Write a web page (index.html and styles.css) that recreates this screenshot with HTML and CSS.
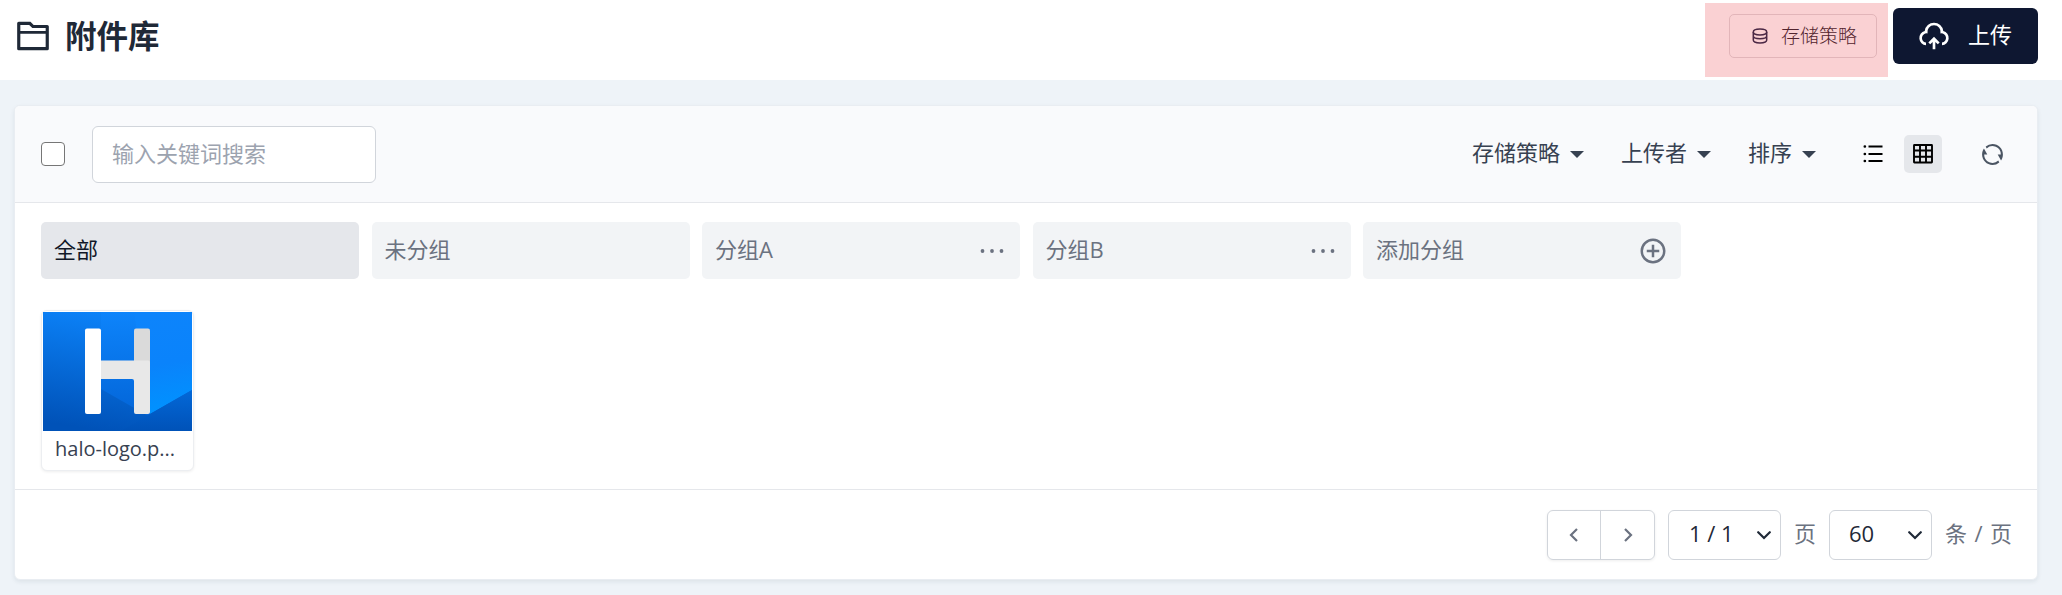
FILE: index.html
```html
<!DOCTYPE html>
<html lang="zh-CN">
<head>
<meta charset="utf-8">
<title>附件库</title>
<link rel="stylesheet" href="styles.css">
</head>
<body>
<header class="page-header">
  <h1 class="title">
    <svg class="title-icon" viewBox="0 0 24 24" fill="currentColor"><path d="M12.414 5H21a1 1 0 0 1 1 1v14a1 1 0 0 1-1 1H3a1 1 0 0 1-1-1V4a1 1 0 0 1 1-1h7.414l2 2zM20 10.500H4V19h16v-8.500zm0-1.700V7h-8.414l-2-2H4v3.800h16z"/></svg>
    <span>附件库</span>
  </h1>
  <div class="actions">
    <div class="highlight">
      <button class="btn-policy">
        <svg class="policy-icon" viewBox="0 0 16 16" fill="none" stroke="currentColor" stroke-width="1.5"><ellipse cx="8" cy="4" rx="6.700" ry="2.900"/><path d="M1.300 4v8c0 1.600 3 2.900 6.700 2.900s6.700-1.300 6.700-2.900V4M1.300 8c0 1.600 3 2.700 6.700 2.700s6.700-1.100 6.700-2.700"/></svg>
        <span>存储策略</span>
      </button>
    </div>
    <button class="btn-upload">
      <svg class="upload-icon" viewBox="0 0 24 24" fill="currentColor"><path d="M12 12.586l4.243 4.242-1.415 1.415L13 16.415V22h-2v-5.587l-1.828 1.830-1.415-1.415L12 12.586zM12 2a7.001 7.001 0 0 1 6.954 6.194 5.500 5.500 0 0 1-.953 10.784v-2.014a3.500 3.500 0 1 0-1.112-6.910 5 5 0 1 0-9.777 0 3.500 3.500 0 0 0-1.292 6.880l.180.030v2.014a5.500 5.500 0 0 1-.954-10.784A7 7 0 0 1 12 2z"/></svg>
      <span class="label">上传</span>
    </button>
  </div>
</header>

<main class="card">
  <div class="toolbar">
    <span class="checkbox"></span>
    <input class="search" type="text" placeholder="输入关键词搜索">
    <div class="filters">
      <div class="filter"><span class="label">存储策略</span><i class="caret"></i></div>
      <div class="filter"><span class="label">上传者</span><i class="caret"></i></div>
      <div class="filter"><span class="label">排序</span><i class="caret"></i></div>
    </div>
    <div class="views">
      <span class="view"><svg width="20" height="20" viewBox="0 0 20 20" fill="none" stroke="currentColor"><path stroke-width="2" d="M5.500 2.500H19.500M5.500 10H19.500M5.500 17H19.500"/><path stroke-width="2.600" stroke-linecap="round" d="M1.800 2.500h.100M1.800 10h.100M1.800 17h.100"/></svg></span>
      <span class="view view-active"><svg width="20" height="20" viewBox="0 0 20 20" fill="none" stroke="currentColor" stroke-width="1.900"><rect x="1" y="1" width="18" height="17.500" rx=".4"/><path d="M7 1v17.500M13 1v17.500M1 6.500h18M1 12.700h18"/></svg></span>
    </div>
    <svg class="refresh" viewBox="0 0 24 24" fill="currentColor"><path d="M5.463 4.433A9.961 9.961 0 0 1 12 2c5.523 0 10 4.477 10 10 0 2.136-.670 4.116-1.810 5.740L17 12h3A8 8 0 0 0 6.460 6.228l-.997-1.795zm13.074 15.134A9.961 9.961 0 0 1 12 22C6.477 22 2 17.523 2 12c0-2.136.670-4.116 1.810-5.740L7 12H4a8 8 0 0 0 13.540 5.772l.997 1.795z"/></svg>
  </div>

  <div class="content">
    <div class="groups">
      <div class="group group-active"><span class="label">全部</span></div>
      <div class="group"><span class="label">未分组</span></div>
      <div class="group"><span class="label">分组A</span><svg class="more" viewBox="0 0 24 6" fill="currentColor"><circle cx="2.500" cy="3" r="1.900"/><circle cx="12" cy="3" r="1.900"/><circle cx="21.500" cy="3" r="1.900"/></svg></div>
      <div class="group"><span class="label">分组B</span><svg class="more" viewBox="0 0 24 6" fill="currentColor"><circle cx="2.500" cy="3" r="1.900"/><circle cx="12" cy="3" r="1.900"/><circle cx="21.500" cy="3" r="1.900"/></svg></div>
      <div class="group"><span class="label">添加分组</span><svg class="add" viewBox="0 0 24 24" fill="currentColor"><path d="M11 11V7h2v4h4v2h-4v4h-2v-4H7v-2h4zm1 11C6.477 22 2 17.523 2 12S6.477 2 12 2s10 4.477 10 10-4.477 10-10 10zm0-2a8 8 0 1 0 0-16 8 8 0 0 0 0 16z"/></svg></div>
    </div>
    <div class="file">
      <svg class="thumb" viewBox="0 0 149 119">
        <defs>
          <linearGradient id="base" x1=".6" y1="0" x2=".4" y2="1"><stop offset="0" stop-color="#0c84fb"/><stop offset="1" stop-color="#0052b8"/></linearGradient>
          <linearGradient id="mid" x1="0" y1="0" x2="0" y2="1"><stop offset="0" stop-color="#0d84fb"/><stop offset="1" stop-color="#0365d8"/></linearGradient>
          <linearGradient id="bright" x1=".5" y1="0" x2=".6" y2="1"><stop offset="0" stop-color="#0d84fb"/><stop offset=".5" stop-color="#0a83fb"/><stop offset="1" stop-color="#0093ff"/></linearGradient>
          <linearGradient id="low" x1="0" y1="0" x2="0" y2="1"><stop offset="0" stop-color="#0368d8"/><stop offset="1" stop-color="#0052b8"/></linearGradient>
        </defs>
        <rect width="149" height="119" fill="url(#base)"/>
        <path d="M58 0H107V105L58 77Z" fill="url(#mid)"/>
        <path d="M91 0H149V78L107 102Z" fill="url(#bright)"/>
        <path d="M149 78L107 102 78 119H149Z" fill="url(#low)"/>
        <rect x="91" y="16.500" width="16" height="50" rx="2" fill="#dadada"/>
        <path d="M58 48.500H105a2 2 0 0 1 2 2V100a2 2 0 0 1-2 2H93a2 2 0 0 1-2-2V69a2 2 0 0 0-2-2H58Z" fill="#e8e8e8"/>
        <rect x="42" y="16.500" width="16" height="85.500" rx="2" fill="#fff"/>
      </svg>
      <div class="file-name">halo-logo.p...</div>
    </div>
  </div>

  <footer class="pager">
    <div class="nav">
      <span class="nav-btn"><svg width="10" height="14" viewBox="0 0 10 14" fill="none" stroke="currentColor" stroke-width="2.200"><path d="M8 1L2 7l6 6"/></svg></span>
      <span class="nav-btn"><svg width="10" height="14" viewBox="0 0 10 14" fill="none" stroke="currentColor" stroke-width="2.200"><path d="M2 1l6 6-6 6"/></svg></span>
    </div>
    <div class="select select-page"><span class="label">1 / 1</span><svg width="14" height="9" viewBox="0 0 14 9" fill="none" stroke="currentColor" stroke-width="2.200" stroke-linecap="round"><path d="M1.200 1.200L7 7l5.800-5.800"/></svg></div>
    <span class="label">页</span>
    <div class="select select-size"><span class="label">60</span><svg width="14" height="9" viewBox="0 0 14 9" fill="none" stroke="currentColor" stroke-width="2.200" stroke-linecap="round"><path d="M1.200 1.200L7 7l5.800-5.800"/></svg></div>
    <span class="label unit">条 / 页</span>
  </footer>
</main>
</body>
</html>
```
FILE: styles.css
```css
* { box-sizing: border-box; }
body {
  margin: 0;
  height: 595px;
  overflow: hidden;
  background: #eef3f8;
  color: #374151;
  font: 22px/32px "Open Sans", "Noto Sans CJK SC", sans-serif;
}
svg { display: block; flex: none; }
button { font: inherit; margin: 0; }
.label { padding-bottom: 4px; }

.page-header {
  display: flex;
  justify-content: space-between;
  height: 80px;
  padding: 3px 24px 0 14px;
  background: #fff;
}
.title {
  display: flex;
  align-items: center;
  gap: 13px;
  height: 66px;
  margin: 0;
  color: #1f2937;
  font-size: 31.500px;
  font-weight: 700;
}
.title-icon { width: 38px; height: 38px; }
.actions { display: flex; align-items: flex-start; gap: 5px; }
.highlight {
  width: 183px;
  height: 74px;
  padding: 11px 11px 0 24px;
  background: #fad1d3;
}
.btn-policy {
  display: flex;
  align-items: center;
  gap: 13px;
  width: 148px;
  height: 44px;
  padding: 0 0 0 22px;
  border: 1px solid #e2b5b9;
  border-radius: 5px;
  background: transparent;
  color: #52242e;
  font-size: 19px;
  font-weight: 300;
  line-height: 28px;
}
.policy-icon { width: 16px; height: 16px; color: #4b2845; }
.btn-upload {
  display: flex;
  align-items: center;
  gap: 18px;
  width: 145px;
  height: 56px;
  margin-top: 5px;
  padding: 0 0 0 25px;
  border: 0;
  border-radius: 6px;
  background: #0e1731;
  color: #fff;
}
.upload-icon { width: 32px; height: 32px; }

.card {
  width: 2024px;
  height: 475px;
  margin: 25px 0 0 14px;
  border: 1px solid #e9edf2;
  border-radius: 6px;
  background: #fff;
  box-shadow: 0 2px 4px rgba(30, 45, 70, .08);
}
.toolbar {
  display: flex;
  align-items: center;
  height: 97px;
  padding: 0 32px 0 26px;
  border-bottom: 1px solid #e5e7eb;
  border-radius: 5px 5px 0 0;
  background: #f9fafc;
}
.checkbox {
  width: 24px;
  height: 24px;
  border: 1.500px solid #767676;
  border-radius: 4px;
  background: #fff;
}
.search {
  width: 284px;
  height: 57px;
  margin-left: 27px;
  padding: 0 19px 2px;
  border: 1px solid #d1d5db;
  border-radius: 6px;
  background: #fff;
  font: inherit;
}
.search::placeholder { color: #9ca3af; opacity: 1; }
.filters { display: flex; gap: 37px; margin-left: auto; }
.filter { display: flex; align-items: center; gap: 10px; }
.caret {
  border: solid transparent;
  border-width: 7px 7px 0;
  border-top-color: #374151;
  margin-top: 1px;
}
.views { display: flex; gap: 12px; margin-left: 38px; color: #000; }
.view {
  display: flex;
  align-items: center;
  justify-content: center;
  width: 38px;
  height: 38px;
  border-radius: 5px;
}
.view-active { background: #e5e7eb; }
.refresh { width: 25px; height: 25px; margin-left: 38px; color: #4b5563; }

.content { height: 287px; padding: 19px 26px; border-bottom: 1px solid #e5e7eb; }
.groups { display: flex; gap: 12.500px; color: #6b7280; }
.group {
  display: flex;
  align-items: center;
  justify-content: space-between;
  width: 318px;
  height: 57px;
  padding: 0 13px;
  border-radius: 5px;
  background: #f2f4f6;
}
.group-active { background: #e5e7eb; color: #111827; }
.more { width: 24px; height: 6px; margin-right: 3px; }
.add { width: 30px; height: 30px; }
.file {
  width: 153px;
  height: 161px;
  margin-top: 31px;
  padding: 1px;
  border: 1px solid #eceef1;
  border-radius: 6px;
  background: #fff;
  box-shadow: 0 1px 3px rgba(0, 0, 0, .07);
}
.thumb { width: 149px; height: 119px; }
.file-name {
  padding-left: 12px;
  font-size: 20px;
  line-height: 36px;
  white-space: nowrap;
}

.pager {
  display: flex;
  align-items: center;
  justify-content: flex-end;
  gap: 13px;
  height: 90px;
  padding: 0 25px 0 0;
  color: #6b7280;
}
.nav {
  display: flex;
  width: 108px;
  height: 50px;
  border: 1px solid #d1d5db;
  border-radius: 6px;
  box-shadow: 0 1px 3px rgba(0, 0, 0, .07);
}
.nav-btn { display: flex; flex: 1; align-items: center; justify-content: center; }
.nav-btn + .nav-btn { border-left: 1px solid #d1d5db; }
.select {
  display: flex;
  align-items: center;
  justify-content: space-between;
  height: 50px;
  padding: 0 9px 0 20px;
  border: 1px solid #d1d5db;
  border-radius: 6px;
  color: #1f2937;
}
.select-page { width: 113px; }
.select-size { width: 103px; padding-left: 19px; }
.unit { word-spacing: 1.800px; }
```
